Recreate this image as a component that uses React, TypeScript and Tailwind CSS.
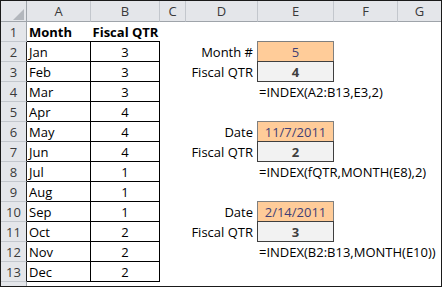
import React from "react";

const cols = ["A", "B", "C", "D", "E", "F", "G"];

const months: [string, string][] = [
  ["Jan", "3"], ["Feb", "3"], ["Mar", "3"], ["Apr", "4"], ["May", "4"], ["Jun", "4"],
  ["Jul", "1"], ["Aug", "1"], ["Sep", "1"], ["Oct", "2"], ["Nov", "2"], ["Dec", "2"],
];

type Side = { label?: string; input?: string; output?: string; formula?: string };

const side: Record<number, Side> = {
  2: { label: "Month #", input: "5" },
  3: { label: "Fiscal QTR", output: "4" },
  4: { formula: "=INDEX(A2:B13,E3,2)" },
  6: { label: "Date", input: "11/7/2011" },
  7: { label: "Fiscal QTR", output: "2" },
  8: { formula: "=INDEX(fQTR,MONTH(E8),2)" },
  10: { label: "Date", input: "2/14/2011" },
  11: { label: "Fiscal QTR", output: "3" },
  12: { formula: "=INDEX(B2:B13,MONTH(E10))" },
};

function RowHeader({ n, table }: { n?: number; table?: boolean }) {
  return (
    <div
      className={
        "bg-[#e4e6ea] border-b border-b-[#c3c7cd] border-r text-center leading-[20px] text-[#3a3a3a] " +
        (table ? "border-r-[#202020]" : "border-r-[#9fa4aa]")
      }
    >
      {n}
    </div>
  );
}

export default function App() {
  const rows: React.ReactNode[] = [];
  for (let r = 1; r <= 13; r++) {
    const s = side[r] || {};
    const table = r >= 2;
    rows.push(<RowHeader key={"h" + r} n={r} table={table} />);
    // A
    rows.push(
      <div
        key={"a" + r}
        className={
          "pl-[2px] leading-[20px] whitespace-nowrap border-b border-b-black " +
          (r === 1 ? "font-bold" : "border-r border-r-black")
        }
      >
        {r === 1 ? "Month" : months[r - 2][0]}
      </div>
    );
    // B
    rows.push(
      <div
        key={"b" + r}
        className={
          "text-center leading-[20px] whitespace-nowrap border-b border-b-black " +
          (r === 1 ? "font-bold" : "border-r border-r-black")
        }
      >
        {r === 1 ? "Fiscal QTR" : months[r - 2][1]}
      </div>
    );
    // C
    rows.push(<div key={"c" + r} />);
    // D
    rows.push(
      <div key={"d" + r} className="text-right pr-[5px] leading-[20px] whitespace-nowrap">
        {s.label}
      </div>
    );
    // E
    if (s.input) {
      rows.push(
        <div
          key={"e" + r}
          className="-ml-px -mt-px border border-[#7f7f7f] bg-[#ffcc99] text-[#3f3f76] text-center leading-[20px]"
        >
          {s.input}
        </div>
      );
    } else if (s.output) {
      rows.push(
        <div
          key={"e" + r}
          className="-ml-px -mt-px border border-[#3f3f3f] bg-[#f2f2f2] text-[#3f3f3f] font-bold text-center leading-[20px]"
        >
          {s.output}
        </div>
      );
    } else {
      rows.push(
        <div key={"e" + r} className="pl-[1px] leading-[20px] whitespace-nowrap relative z-10">
          {s.formula}
        </div>
      );
    }
    rows.push(<div key={"f" + r} />);
    rows.push(<div key={"g" + r} />);
  }

  return (
    <div className="bg-white w-[443px] h-[288px]">
      <div
        className="w-[442px] h-[287px] border border-[#1a1a1a] bg-white grid grid-cols-[26px_64px_69px_26px_72px_76px_64px_1fr] grid-rows-[21px_repeat(13,20px)_1fr] overflow-hidden text-black"
        style={{ fontFamily: "'Open Sans', 'Liberation Sans', sans-serif", fontSize: "13px" }}
      >
        <div className="relative bg-[#e4e6ea] border-r border-b border-r-[#9fa4aa] border-b-[#9fa4aa]">
          <svg className="absolute left-[12px] top-[8px]" width="11" height="11" viewBox="0 0 11 11">
            <polygon points="11,0 11,11 0,11" fill="#b3b7bd" />
          </svg>
        </div>
        {cols.map((c, i) => (
          <div
            key={c}
            className={
              "bg-[#e4e6ea] border-b border-b-[#9fa4aa] text-center leading-[20px] text-[#3a3a3a] " +
              (i < 6 ? "border-r border-r-[#c3c7cd]" : "")
            }
          >
            {c}
          </div>
        ))}
        {rows}
        <div className="bg-[#e4e6ea] border-r border-r-[#9fa4aa]" />
        <div className="col-span-7" />
      </div>
    </div>
  );
}
